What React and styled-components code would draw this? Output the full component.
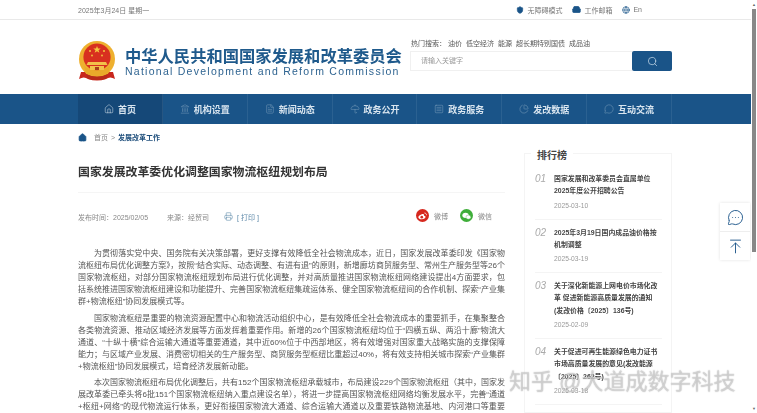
import React from 'react';
import styled, { createGlobalStyle } from 'styled-components';
import {
	ArrowUpToLine,
	ChartPie,
	FileText,
	Globe,
	Home,
	Inbox,
	Landmark,
	MessageCircle,
	MessageCircleMore,
	Printer,
	Search,
	ShieldCheck,
	SquareMenu,
	Umbrella,
} from 'lucide-react';

const GlobalStyle = createGlobalStyle`
	html, body {
		margin: 0;
		padding: 0;
		background: #fff;
		overflow: hidden;
	}
	body {
		font-family: "Liberation Sans", "Noto Sans CJK SC", sans-serif;
		color: #444;
	}
`;

const navItems = [
	{ label: '首页', icon: Home, active: true },
	{ label: '机构设置', icon: Landmark },
	{ label: '新闻动态', icon: FileText },
	{ label: '政务公开', icon: Umbrella },
	{ label: '政务服务', icon: SquareMenu },
	{ label: '发改数据', icon: ChartPie },
	{ label: '互动交流', icon: MessageCircle },
];

const hotWords = ['油价', '低空经济', '能源', '超长期特别国债', '成品油'];

const rankItems = [
	{ lines: ['国家发展和改革委员会直属单位', '2025年度公开招聘公告'], date: '2025-03-10' },
	{ lines: ['2025年3月19日国内成品油价格按', '机制调整'], date: '2025-03-19' },
	{ lines: ['关于深化新能源上网电价市场化改', '革 促进新能源高质量发展的通知', '(发改价格〔2025〕136号)'], date: '2025-02-09' },
	{ lines: ['关于促进可再生能源绿色电力证书', '市场高质量发展的意见(发改能源', '〔2025〕262号)'], date: '2025-03-18' },
];

const paragraphs = [
	'为贯彻落实党中央、国务院有关决策部署，更好支撑有效降低全社会物流成本，近日，国家发展改革委印发《国家物流枢纽布局优化调整方案》，按照“结合实际、动态调整、有进有退”的原则，新增廊坊商贸服务型、常州生产服务型等26个国家物流枢纽，对部分国家物流枢纽规划布局进行优化调整，并对高质量推进国家物流枢纽网络建设提出4方面要求，包括系统推进国家物流枢纽建设和功能提升、完善国家物流枢纽集疏运体系、健全国家物流枢纽间的合作机制、探索“产业集群+物流枢纽”协同发展模式等。',
	'国家物流枢纽是重要的物流资源配置中心和物流活动组织中心，是有效降低全社会物流成本的重要抓手，在集聚整合各类物流资源、推动区域经济发展等方面发挥着重要作用。新增的26个国家物流枢纽均位于“四横五纵、两沿十廊”物流大通道、“十纵十横”综合运输大通道等重要通道，其中近60%位于中西部地区，将有效增强对国家重大战略实施的支撑保障能力；与区域产业发展、消费密切相关的生产服务型、商贸服务型枢纽比重超过40%，将有效支持相关城市探索“产业集群+物流枢纽”协同发展模式，培育经济发展新动能。',
	'本次国家物流枢纽布局优化调整后，共有152个国家物流枢纽承载城市，布局建设229个国家物流枢纽（其中，国家发展改革委已牵头将6批151个国家物流枢纽纳入重点建设名单），将进一步提高国家物流枢纽网络均衡发展水平，完善“通道+枢纽+网络”的现代物流运行体系，更好衔接国家物流大通道、综合运输大通道以及重要铁路物流基地、内河港口等重要物流基础设施。',
];

const Emblem = () => (
	<svg width='38' height='41' viewBox='0 0 38 41'>
		<path d='M3 31 L1 38 Q6 35 10 38 Q19 41 28 38 Q32 35 37 38 L35 31 Z' fill='#c8261c' />
		<circle cx='19' cy='18' r='18' fill='#eeb02f' />
		<circle cx='19' cy='16' r='13.6' fill='#d8301f' />
		<path d='M6 25 Q19 34 32 25 L30 33 Q19 37 8 33 Z' fill='#e9a92a' />
		<path d='M19 5 l1 2.6 h2.7 l-2.2 1.6 0.9 2.6 -2.4 -1.6 -2.4 1.6 0.9 -2.6 -2.2 -1.6 h2.7 z' fill='#f3c740' />
		<circle cx='12' cy='10' r='1' fill='#f3c740' />
		<circle cx='26' cy='10' r='1' fill='#f3c740' />
		<circle cx='14' cy='14.5' r='0.9' fill='#f3c740' />
		<circle cx='24' cy='14.5' r='0.9' fill='#f3c740' />
		<path d='M10 21 h18 l1.5 3 h-21 z M12 25 h14 v4 h-14 z' fill='#f2c14a' />
		<rect x='17' y='26' width='4' height='3' fill='#a8401c' />
		<path d='M8 33 Q19 38 30 33 L28 38 Q19 40 10 38 Z' fill='#b82a1a' />
	</svg>
);

const WeiboGlyph = () => (
	<svg width='9' height='8' viewBox='0 0 24 20'>
		<path
			d='M10 5 C4 7 0 11 1 14 C2 18 8 20 13 18 C18 17 21 14 20 11 C19.500 9.500 17 9 16 9 C17 6 15 4 10 5 Z'
			fill='#fff'
		/>
		<circle cx='10' cy='13' r='3.500' fill='#d6281e' />
		<path d='M17 2 C20 2 23 4 23 8' stroke='#fff' strokeWidth='2' fill='none' />
	</svg>
);

const WechatGlyph = () => (
	<svg width='9' height='8' viewBox='0 0 24 20'>
		<ellipse cx='9.500' cy='8' rx='8.500' ry='7' fill='#fff' />
		<ellipse cx='17' cy='13' rx='6.500' ry='5.500' fill='#fff' stroke='#3fae3a' strokeWidth='1' />
	</svg>
);

const App = () => {
	return (
		<>
			<GlobalStyle />
			<Viewport>
				<Page>
					<TopBar>
						<Container>
							<TopRow>
								<DateText>2025年3月24日 星期一</DateText>
								<TopLinks>
									<TopLink>
										<ShieldCheck size={8} color='#1a5488' fill='#1a5488' />
										无障碍模式
									</TopLink>
									<TopLink>
										<Inbox size={9} color='#1a5488' fill='#1a5488' />
										工作邮箱
									</TopLink>
									<TopLink>
										<Globe size={8} color='#1a5488' />
										En
									</TopLink>
								</TopLinks>
							</TopRow>
						</Container>
					</TopBar>

					<Container>
						<Header>
							<Brand>
								<Emblem />
								<BrandText>
									<BrandCn>中华人民共和国国家发展和改革委员会</BrandCn>
									<BrandEn>National Development and Reform Commission</BrandEn>
								</BrandText>
							</Brand>
							<SearchArea>
								<HotRow>
									<HotLabel>热门搜索：</HotLabel>
									{hotWords.map((word) => (
										<span key={word}>{word}</span>
									))}
								</HotRow>
								<SearchBox>
									<SearchInput>请输入关键字</SearchInput>
									<SearchButton>
										<Search size={11} color='#cfe0ee' strokeWidth={1.5} />
									</SearchButton>
								</SearchBox>
							</SearchArea>
						</Header>
					</Container>

					<NavBar>
						<Container>
							<NavList>
								{navItems.map((item) => {
									const Icon = item.icon;
									return (
										<NavItem key={item.label} $active={item.active}>
											<NavIcon $active={item.active}>
												<Icon size={10} strokeWidth={1.2} />
											</NavIcon>
											{item.label}
										</NavItem>
									);
								})}
							</NavList>
						</Container>
					</NavBar>

					<Container>
						<Breadcrumb>
							<Home size={9} color='#1a5488' fill='#1a5488' />
							<Crumb>首页</Crumb>
							<Crumb>&gt;</Crumb>
							<CrumbCurrent>发展改革工作</CrumbCurrent>
						</Breadcrumb>

						<Columns>
							<Article>
								<Title>国家发展改革委优化调整国家物流枢纽规划布局</Title>
								<MetaRow>
									<MetaLeft>
										<span>发布时间：2025/02/05</span>
										<span>来源：经贸司</span>
										<PrintLink>
											<Printer size={9} color='#5b87a8' strokeWidth={1.5} />
											[ 打印 ]
										</PrintLink>
									</MetaLeft>
									<ShareRow>
										<ShareItem>
											<ShareDot $color='#d6281e'>
												<WeiboGlyph />
											</ShareDot>
											微博
										</ShareItem>
										<ShareItem>
											<ShareDot $color='#3fae3a'>
												<WechatGlyph />
											</ShareDot>
											微信
										</ShareItem>
									</ShareRow>
								</MetaRow>
								<Body>
									{paragraphs.map((text) => (
										<Paragraph key={text.slice(0, 8)}>{text}</Paragraph>
									))}
								</Body>
							</Article>

							<Sidebar>
								<SidebarTitle>排行榜</SidebarTitle>
								{rankItems.map((item, index) => (
									<RankItem key={item.date}>
										<RankNumber>0{index + 1}</RankNumber>
										<div>
											{item.lines.map((line) => (
												<RankLine key={line}>{line}</RankLine>
											))}
											<RankDate>{item.date}</RankDate>
										</div>
									</RankItem>
								))}
							</Sidebar>
						</Columns>
					</Container>

					<FloatWidget>
						<FloatButton>
							<MessageCircleMore size={17} color='#1a5488' strokeWidth={1.3} />
						</FloatButton>
						<FloatButton>
							<ArrowUpToLine size={17} color='#1a5488' strokeWidth={1.3} />
						</FloatButton>
					</FloatWidget>
				</Page>

				<ScrollRail>
					<RailArrow>▲</RailArrow>
					<RailThumb />
					<RailArrow>▼</RailArrow>
				</ScrollRail>

				<Watermark>知乎 @大道成数字科技</Watermark>
			</Viewport>
		</>
	);
};

export default App;

const Viewport = styled.div`
	position: relative;
	display: flex;
	width: 757px;
	height: 413px;
	overflow: hidden;
	filter: blur(0.35px);
`;

const Page = styled.div`
	position: relative;
	width: 751px;
	height: 413px;
	overflow: hidden;
	flex-shrink: 0;
`;

const Container = styled.div`
	width: 594px;
	margin-left: 78px;
`;

const TopBar = styled.div`
	height: 19px;
	border-bottom: 1px solid #e9e9e9;
`;

const TopRow = styled.div`
	display: flex;
	align-items: center;
	justify-content: space-between;
	height: 19px;
	font-size: 7px;
	color: #777;
`;

const DateText = styled.span`
	font-size: 7px;
`;

const TopLinks = styled.div`
	display: flex;
	gap: 10px;
	margin-right: 30px;
`;

const TopLink = styled.span`
	display: flex;
	align-items: center;
	gap: 3px;
`;

const Header = styled.div`
	display: flex;
	justify-content: space-between;
	height: 74px;
`;

const Brand = styled.div`
	display: flex;
	align-items: flex-start;
	gap: 9px;
	padding-top: 21px;
`;

const BrandText = styled.div`
	display: flex;
	flex-direction: column;
	padding-top: 7px;
`;

const BrandCn = styled.div`
	font-size: 16.300px;
	line-height: 17px;
	font-weight: 700;
	color: #1f5a8c;
	white-space: nowrap;
`;

const BrandEn = styled.div`
	font-size: 10.500px;
	line-height: 12px;
	letter-spacing: 1.260px;
	color: #2f6491;
	white-space: nowrap;
`;

const SearchArea = styled.div`
	width: 262px;
	padding-top: 18px;
`;

const HotRow = styled.div`
	display: flex;
	gap: 4px;
	height: 13px;
	font-size: 7px;
	line-height: 11px;
	color: #555;
`;

const HotLabel = styled.span`
	margin-right: -2px;
	padding-left: 1px;
`;

const SearchBox = styled.div`
	display: flex;
	height: 20px;
	border-radius: 2px;
`;

const SearchInput = styled.div`
	flex: 1;
	padding-left: 10px;
	border: 1px solid #f0f0f0;
	border-right: 0;
	font-size: 7px;
	line-height: 18px;
	color: #999;
`;

const SearchButton = styled.div`
	display: flex;
	align-items: center;
	justify-content: center;
	width: 40px;
	border-radius: 2px;
	background: #1a5488;
`;

const NavBar = styled.div`
	height: 30px;
	background: #1a5488;
`;

const NavList = styled.div`
	display: flex;
	height: 30px;
`;

const NavItem = styled.div`
	display: flex;
	flex: 0 0 84.860px;
	align-items: center;
	justify-content: center;
	gap: 4px;
	font-size: 9px;
	font-weight: 700;
	color: #d9e5ef;
	background: ${(props) => (props.$active ? '#154878' : 'transparent')};
	border-right: 1px solid rgba(255, 255, 255, 0.08);
	box-sizing: border-box;
`;

const NavIcon = styled.span`
	display: flex;
	color: ${(props) => (props.$active ? '#dfe9f1' : '#7fa0bc')};
`;

const Breadcrumb = styled.div`
	display: flex;
	align-items: center;
	gap: 3px;
	height: 14px;
	margin-top: 6px;
	font-size: 7px;
	color: #888;

	svg {
		margin-right: 4px;
	}
`;

const Crumb = styled.span`
	color: #888;
`;

const CrumbCurrent = styled.span`
	font-weight: 700;
	color: #1f4f7c;
`;

const Columns = styled.div`
	display: flex;
	align-items: flex-start;
	gap: 19px;
`;

const Article = styled.div`
	width: 427px;
	padding-top: 21px;
`;

const Title = styled.h1`
	margin: 0;
	padding-bottom: 13px;
	border-bottom: 1px solid #f5f5f5;
	font-size: 11.900px;
	line-height: 14px;
	font-weight: 700;
	color: #333;
`;

const MetaRow = styled.div`
	display: flex;
	justify-content: space-between;
	align-items: center;
	height: 20px;
	margin-top: 12px;
	padding-right: 13px;
	font-size: 7px;
	color: #888;
`;

const MetaLeft = styled.div`
	display: flex;
	align-items: center;
	gap: 19px;
	padding-top: 3px;
`;

const PrintLink = styled.span`
	display: flex;
	align-items: center;
	gap: 4px;
	margin-left: -4px;
	color: #5b87a8;
`;

const ShareRow = styled.div`
	display: flex;
	gap: 12px;
	padding-top: 1px;
`;

const ShareItem = styled.span`
	display: flex;
	align-items: center;
	gap: 5px;
`;

const ShareDot = styled.span`
	display: flex;
	align-items: center;
	justify-content: center;
	width: 13px;
	height: 13px;
	border-radius: 50%;
	background: ${(props) => props.$color};
`;

const Body = styled.div`
	margin-top: 23px;
`;

const Paragraph = styled.p`
	margin: 0 0 4.500px;
	text-indent: 2em;
	text-align: justify;
	font-size: 8px;
	line-height: 12px;
	color: #555;
`;

const Sidebar = styled.div`
	position: relative;
	box-sizing: border-box;
	width: 148px;
	margin-top: 9px;
	padding: 19px 9px 0 10px;
	border: 1px solid #f4f4f4;
`;

const SidebarTitle = styled.div`
	position: absolute;
	top: -5px;
	left: 6px;
	padding: 0 6px;
	background: #fff;
	font-size: 10px;
	line-height: 14px;
	font-weight: 700;
	color: #444;
`;

const RankItem = styled.div`
	display: flex;
	gap: 8px;
	padding-bottom: 8px;
	margin-bottom: 7px;
	border-bottom: 1px solid #f4f4f4;
`;

const RankNumber = styled.span`
	width: 11px;
	flex-shrink: 0;
	font-size: 10px;
	line-height: 12px;
	font-style: italic;
	color: #aaa;
`;

const RankLine = styled.div`
	font-size: 6.900px;
	line-height: 12.300px;
	font-weight: 700;
	color: #444;
	white-space: nowrap;
`;

const RankDate = styled.div`
	margin-top: 2px;
	font-size: 6.700px;
	line-height: 11px;
	color: #999;
`;

const FloatWidget = styled.div`
	position: absolute;
	top: 203px;
	left: 720px;
	width: 30px;
	background: #fff;
	box-shadow: 0 0 3px rgba(0, 0, 0, 0.12);
`;

const FloatButton = styled.div`
	display: flex;
	align-items: center;
	justify-content: center;
	height: 28px;

	& + & {
		border-top: 1px solid #eee;
	}
`;

const ScrollRail = styled.div`
	display: flex;
	flex-direction: column;
	align-items: center;
	justify-content: space-between;
	width: 6px;
	height: 413px;
	background: #fff;
`;

const RailArrow = styled.div`
	height: 9px;
	font-size: 4px;
	line-height: 9px;
	color: #666;
`;

const RailThumb = styled.div`
	width: 4px;
	height: 243px;
	margin-bottom: auto;
	background: #888;
`;

const Watermark = styled.div`
	position: absolute;
	top: 368px;
	left: 509px;
	font-size: 22px;
	line-height: 27px;
	white-space: nowrap;
	color: rgba(255, 255, 255, 0.55);
	text-shadow: 0 0 1px rgba(90, 90, 90, 0.7);
`;
